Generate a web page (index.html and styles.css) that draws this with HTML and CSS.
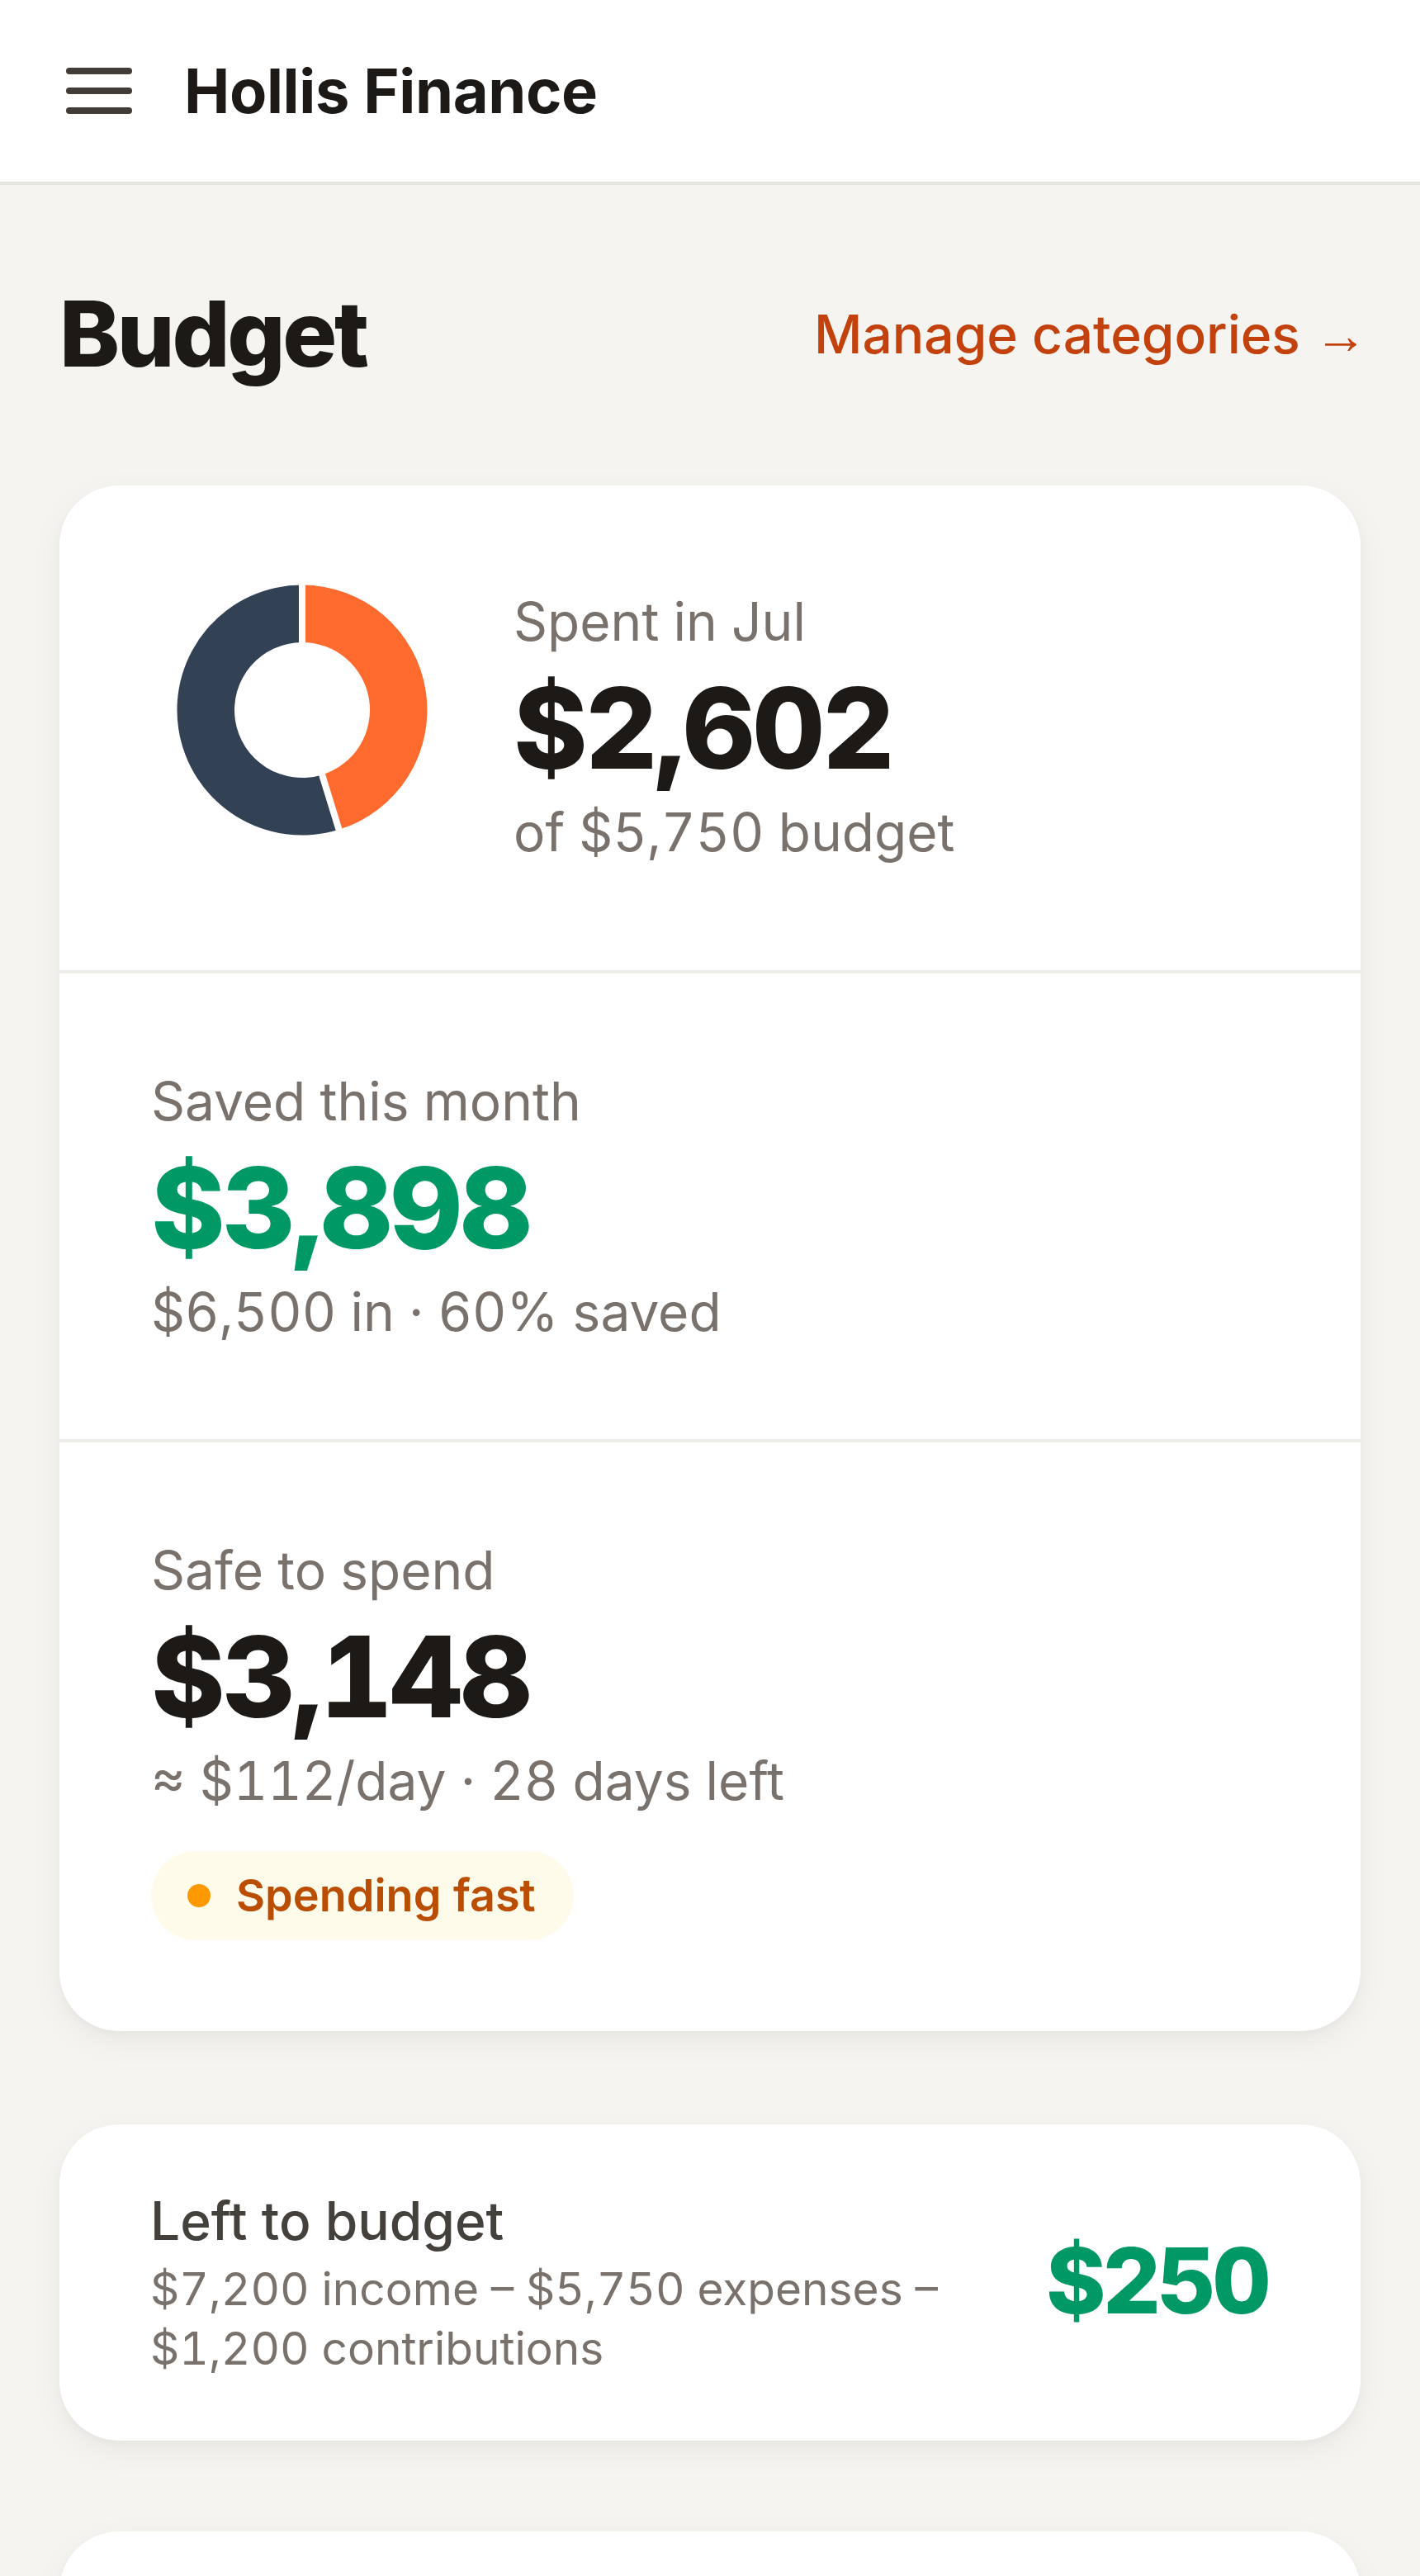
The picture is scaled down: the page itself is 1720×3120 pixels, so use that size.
FILE: index.html
```html
<!DOCTYPE html>
<html lang="en">
<head>
<meta charset="utf-8">
<title>Hollis Finance – Budget</title>
<link rel="stylesheet" href="styles.css">
</head>
<body>
<header class="topbar">
  <button class="menu-btn" aria-label="Menu">
    <svg class="menu-icon" viewBox="0 0 80 56" width="80" height="56" aria-hidden="true">
      <line x1="4" y1="4" x2="76" y2="4"/>
      <line x1="4" y1="28" x2="76" y2="28"/>
      <line x1="4" y1="52" x2="76" y2="52"/>
    </svg>
  </button>
  <div class="brand">Hollis Finance</div>
</header>

<main class="page">
  <div class="page-head">
    <h1 class="page-title">Budget</h1>
    <a class="head-link" href="#">Manage categories <span class="arrow">→</span></a>
  </div>

  <section class="card summary">
    <div class="sum-row spent">
      <svg class="donut" viewBox="0 0 304 304" width="304" height="304" aria-hidden="true">
        <path class="seg-spent" d="M152 0.5 A151.5 151.5 0 0 1 196.54 296.80 L176.11 230.38 A82 82 0 0 0 152 70 Z"/>
        <path class="seg-left" d="M196.54 296.80 A151.5 151.5 0 1 1 152 0.5 L152 70 A82 82 0 1 0 176.11 230.38 Z"/>
        <line class="seg-gap" x1="152" y1="76" x2="152" y2="-4"/>
        <line class="seg-gap" x1="174.93" y1="226.55" x2="197.86" y2="301.10"/>
      </svg>
      <div class="stat">
        <div class="stat-label">Spent in Jul</div>
        <div class="stat-value">$2,602</div>
        <div class="stat-sub">of $5,750 budget</div>
      </div>
    </div>

    <div class="sum-row">
      <div class="stat">
        <div class="stat-label">Saved this month</div>
        <div class="stat-value positive">$3,898</div>
        <div class="stat-sub">$6,500 in · 60% saved</div>
      </div>
    </div>

    <div class="sum-row">
      <div class="stat">
        <div class="stat-label">Safe to spend</div>
        <div class="stat-value">$3,148</div>
        <div class="stat-sub">≈ $112/day · 28 days left</div>
        <div class="pace-badge"><span class="pace-dot"></span>Spending fast</div>
      </div>
    </div>
  </section>

  <section class="card left-card">
    <div class="left-text">
      <div class="left-title">Left to budget</div>
      <div class="left-sub">$7,200 income – $5,750 expenses – $1,200 contributions</div>
    </div>
    <div class="left-amount">$250</div>
  </section>

  <section class="card cat-card" aria-label="Categories"></section>
</main>
</body>
</html>
```

FILE: styles.css
```css
* {
  box-sizing: border-box;
}

html, body {
  margin: 0;
  padding: 0;
}

body {
  background: #f5f4f0;
  font-family: "Inter", "Noto Sans", "Liberation Sans", sans-serif;
  font-variant-numeric: tabular-nums;
  color: #1c1917;
}

/* Top bar */
.topbar {
  height: 224px;
  background: #ffffff;
  border-bottom: 4px solid #e7e5e0;
  display: flex;
  align-items: center;
  padding: 0 80px;
  gap: 63px;
}

.menu-btn {
  background: none;
  border: 0;
  padding: 0;
  margin: 0;
  display: flex;
  cursor: pointer;
}

.menu-icon line {
  stroke: #403b37;
  stroke-width: 8;
  stroke-linecap: round;
}

.brand {
  font-size: 74px;
  font-weight: 700;
  color: #1c1917;
  letter-spacing: -0.005em;
  font-variant-numeric: normal;
}

/* Page */
.page {
  padding: 114px 72px 112px;
}

.page-head {
  display: flex;
  align-items: center;
  justify-content: space-between;
  margin-bottom: 118px;
}

.page-title {
  margin: 0;
  font-size: 110px;
  line-height: 132px;
  font-weight: 800;
  letter-spacing: -0.03em;
  color: #1c1917;
}

.head-link {
  font-size: 64px;
  font-weight: 500;
  color: #c2410c;
  text-decoration: none;
  margin-right: -8px;
}

.arrow {
  font-family: "Liberation Sans", "DejaVu Sans", sans-serif;
  font-weight: 400;
}

/* Cards */
.card {
  background: #ffffff;
  border-radius: 72px;
  box-shadow: 0 4px 8px rgba(28, 25, 23, 0.03), 0 12px 40px rgba(28, 25, 23, 0.05);
}

.summary {
  display: flex;
  flex-direction: column;
}

.sum-row {
  padding: 110px 113px 110px 111px;
}

.sum-row + .sum-row {
  border-top: 4px solid #eeece8;
}

.sum-row.spent {
  display: flex;
  align-items: flex-start;
  gap: 104px;
  padding: 120px 113px 123px 142px;
}

.donut {
  flex: none;
  display: block;
}

.seg-spent {
  fill: #ff6b2f;
}

.seg-left {
  fill: #334155;
}

.seg-gap {
  stroke: #ffffff;
  stroke-width: 8;
}

.stat-label {
  font-size: 64px;
  line-height: 89.6px;
  color: #79716b;
}

.stat-value {
  font-size: 136px;
  line-height: 136px;
  font-weight: 800;
  letter-spacing: -0.023em;
  color: #1c1917;
  margin-top: 16px;
}

.stat-value.positive {
  color: #009966;
}

.stat-sub {
  font-size: 64px;
  line-height: 89.6px;
  color: #79716b;
  margin-top: 13px;
}

.pace-badge {
  display: inline-flex;
  align-items: center;
  gap: 31px;
  height: 108px;
  padding: 0 46px 0 44px;
  margin-top: 40px;
  border-radius: 54px;
  background: #fffbeb;
  color: #bb4d00;
  font-size: 54px;
  font-weight: 600;
}

.pace-dot {
  width: 28px;
  height: 28px;
  border-radius: 50%;
  background: #fe9a00;
  flex: none;
}

/* Left to budget */
.left-card {
  margin-top: 113px;
  display: flex;
  align-items: center;
  gap: 64px;
  padding: 72px 113px 76px 110px;
}

.left-text {
  flex: 1;
  min-width: 0;
}

.left-title {
  font-size: 64px;
  line-height: 89.6px;
  font-weight: 500;
  color: #44403c;
}

.left-sub {
  margin-top: 2px;
  font-size: 55px;
  line-height: 72px;
  color: #79716b;
}

.left-amount {
  flex: none;
  font-size: 110px;
  font-weight: 800;
  letter-spacing: -0.04em;
  color: #009966;
}

/* Next card (continues below the fold) */
.cat-card {
  margin-top: 110px;
  min-height: 480px;
}
```
